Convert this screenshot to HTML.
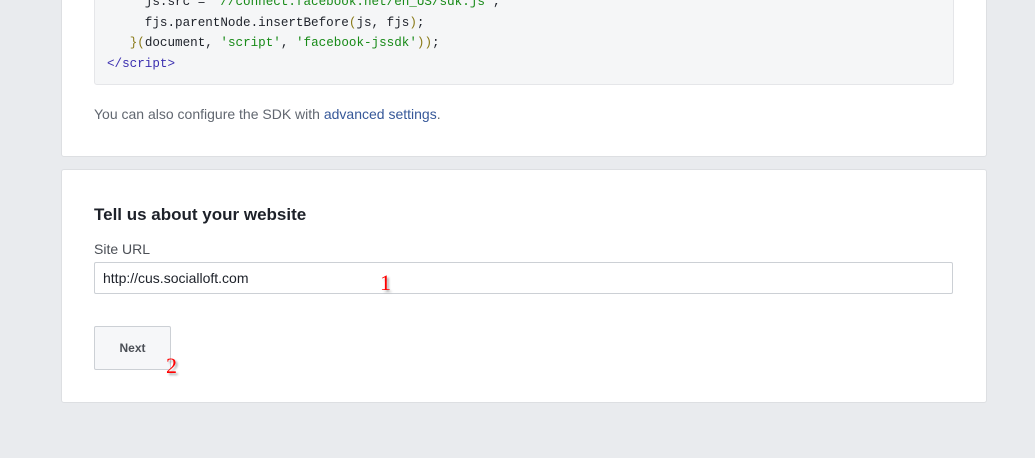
<!DOCTYPE html>
<html><head><meta charset="utf-8"><style>
html,body{margin:0;padding:0;}
body{width:1035px;height:458px;background:#e9ebee;position:relative;overflow:hidden;font-family:"Liberation Sans",Arial,sans-serif;}
.card{position:absolute;left:61px;width:924px;background:#fff;border:1px solid #dddfe2;border-radius:3px;}
.code{position:absolute;left:32px;width:858px;background:#f5f6f7;border:1px solid #e5e6e9;border-radius:3px;}
pre{margin:0;position:absolute;left:12px;font-family:"Liberation Mono","DejaVu Sans Mono",monospace;font-size:12.6px;line-height:20.5px;color:#1d2129;white-space:pre;}
.g{color:#178a17}.o{color:#8a7a18}.b{color:#3b2fb0}
.t{position:absolute;font-size:14px;color:#616770;}
.t a{color:#365899;text-decoration:none}
h3{position:absolute;left:32px;top:35px;margin:0;font-size:17px;font-weight:bold;color:#1d2129;}
.lbl{position:absolute;left:32px;top:71px;font-size:14px;color:#4b4f56;}
.inp{position:absolute;left:32px;top:92px;border:1px solid #ccd0d5;border-radius:2px;box-sizing:border-box;width:859px;height:32px;font-size:14px;color:#1d2129;padding:7px 8px;}
.btn{position:absolute;left:32px;top:156px;width:77px;height:44px;box-sizing:border-box;border:1px solid #ccd0d5;border-radius:2px;background:#f6f7f9;font-size:12px;font-weight:bold;color:#4b4f56;text-align:center;line-height:42px;}
.num{position:absolute;font-family:"Liberation Serif",serif;color:#f00;font-size:22px;text-shadow:2px 2px 2px rgba(0,0,0,.35);}
</style></head><body>
<div class="card" style="top:-20px;height:175px;">
  <div class="code" style="top:0;height:102px;">
    <pre style="top:10px;">     js.src = <span class="g">"//connect.facebook.net/en_US/sdk.js"</span>;
     fjs.parentNode.insertBefore<span class="o">(</span>js, fjs<span class="o">)</span>;
   <span class="o">}(</span>document, <span class="g">'script'</span>, <span class="g">'facebook-jssdk'</span><span class="o">))</span>;
<span class="b">&lt;/script&gt;</span></pre>
  </div>
  <div class="t" style="left:32px;top:125px;">You can also configure the SDK with <a>advanced settings</a>.</div>
</div>
<div class="card" style="top:169px;height:232px;">
  <h3>Tell us about your website</h3>
  <div class="lbl">Site URL</div>
  <div class="inp">http://cus.socialloft.com</div>
  <div class="btn">Next</div>
</div>
<div class="num" style="left:380px;top:270px;">1</div>
<div class="num" style="left:166px;top:353px;">2</div>
</body></html>
